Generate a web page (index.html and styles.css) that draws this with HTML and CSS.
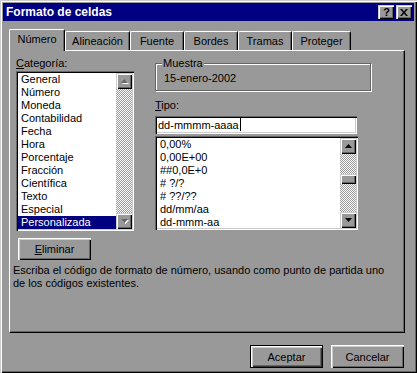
FILE: index.html
```html
<!DOCTYPE html>
<html lang="es">
<head>
  <meta charset="UTF-8" />
  <title>Formato de celdas</title>
  <link rel="stylesheet" href="styles.css">
</head>
<body>
  <div class="dialog">
    <div class="titlebar">
      <span class="title">Formato de celdas</span>
      <div class="title-buttons">
        <span class="tbtn help">?</span>
        <span class="tbtn">
          <svg width="8" height="7" viewBox="0 0 8 7"><path d="M0 0h2l2 2.5L6 0h2L5 3.5 8 7H6L4 4.5 2 7H0l3-3.5z" fill="#000"/></svg>
        </span>
      </div>
    </div>

    <div class="content">
      <div class="tabs">
        <div class="tab active w-numero">Número</div>
        <div class="tab w-alin">Alineación</div>
        <div class="tab w-std">Fuente</div>
        <div class="tab w-std">Bordes</div>
        <div class="tab w-std">Tramas</div>
        <div class="tab w-prot">Proteger</div>
      </div>

      <div class="panel">
        <div class="columns">
          <div class="col-left">
            <div class="label"><u>C</u>ategoría:</div>
            <div class="listbox cat-list">
              <ul class="items">
                <li>General</li>
                <li>Número</li>
                <li>Moneda</li>
                <li>Contabilidad</li>
                <li>Fecha</li>
                <li>Hora</li>
                <li>Porcentaje</li>
                <li>Fracción</li>
                <li>Científica</li>
                <li>Texto</li>
                <li>Especial</li>
                <li class="selected">Personalizada</li>
              </ul>
              <div class="scrollbar">
                <span class="sbtn disabled"><svg width="7" height="4" viewBox="0 0 7 4"><polygon points="3.5,0 7,4 0,4"/></svg></span>
                <span class="track"></span>
                <span class="sbtn disabled"><svg width="7" height="4" viewBox="0 0 7 4"><polygon points="0,0 7,0 3.5,4"/></svg></span>
              </div>
            </div>
            <button class="btn eliminar"><u>E</u>liminar</button>
          </div>

          <div class="col-right">
            <fieldset class="sample">
              <legend>Muestra</legend>
              <div class="sample-value">15-enero-2002</div>
            </fieldset>
            <div class="label tipo-label"><u>T</u>ipo:</div>
            <div class="textbox">dd-mmmm-aaaa<span class="caret"></span></div>
            <div class="listbox type-list">
              <ul class="items">
                <li>0,00%</li>
                <li>0,00E+00</li>
                <li>##0,0E+0</li>
                <li># ?/?</li>
                <li># ??/??</li>
                <li>dd/mm/aa</li>
                <li>dd-mmm-aa</li>
              </ul>
              <div class="scrollbar">
                <span class="sbtn"><svg width="7" height="4" viewBox="0 0 7 4"><polygon points="3.5,0 7,4 0,4"/></svg></span>
                <span class="track"><span class="thumb"></span></span>
                <span class="sbtn"><svg width="7" height="4" viewBox="0 0 7 4"><polygon points="0,0 7,0 3.5,4"/></svg></span>
              </div>
            </div>
          </div>
        </div>

        <p class="hint">Escriba el código de formato de número, usando como punto de partida uno de los códigos existentes.</p>
      </div>

      <div class="actions">
        <button class="btn default">Aceptar</button>
        <button class="btn">Cancelar</button>
      </div>
    </div>
  </div>
</body>
</html>
```

FILE: styles.css
```css
* { box-sizing: border-box; }
body {
  margin: 0;
  background: #999;
  font-family: "Liberation Sans", Arial, sans-serif;
  font-size: 11px;
  color: #000;
}

.dialog {
  width: 417px;
  height: 373px;
  padding: 3px;
  background: #999;
  box-shadow: inset 1px 1px #ccc, inset 2px 2px #fff,
              inset -1px -1px #000, inset -2px -2px #666;
}

/* title bar */
.titlebar {
  height: 18px;
  background: #000080;
  color: #fff;
  display: flex;
  align-items: center;
  justify-content: space-between;
  padding-left: 3px;
}

.title {
  font-weight: bold;
  font-size: 12px;
}

.title-buttons {
  display: flex;
  gap: 2px;
  margin-right: 2px;
}

.tbtn {
  width: 16px;
  height: 14px;
  background: #999;
  display: flex;
  align-items: center;
  justify-content: center;
  box-shadow: inset 1px 1px #ccc, inset 2px 2px #fff,
              inset -1px -1px #000, inset -2px -2px #666;
}

.tbtn.help {
  color: #000;
  font-weight: bold;
  font-size: 11px;
  line-height: 14px;
  padding-left: 1px;
}

/* tabs */
.content {
  padding: 8px 9px 0 6px;
}

.tabs {
  display: flex;
  align-items: flex-end;
  height: 21px;
}

.tab {
  height: 19px;
  border-top: 1px solid #fff;
  border-left: 1px solid #fff;
  border-right: 1px solid #000;
  border-radius: 2px 2px 0 0;
  box-shadow: inset -1px 0 #666;
  display: flex;
  align-items: center;
  justify-content: center;
  padding-bottom: 1px;
}

.tab.active {
  height: 22px;
  margin-bottom: -1px;
  background: #999;
  position: relative;
  z-index: 1;
  padding-bottom: 3px;
}

.w-numero { width: 56px; }
.w-alin { width: 65px; }
.w-std { width: 54px; }
.w-prot { width: 59px; }

.panel {
  height: 283px;
  border-top: 1px solid #fff;
  border-left: 1px solid #fff;
  border-right: 1px solid #000;
  border-bottom: 1px solid #000;
  box-shadow: inset -1px -1px #666;
  padding: 6px 0 0 3px;
}

.columns {
  display: flex;
  gap: 21px;
  padding-left: 3px;
}

.col-left { width: 118px; }
.col-right { width: 216px; }

.label {
  line-height: 13px;
  margin-bottom: 1px;
}

/* list boxes */
.listbox {
  display: flex;
  background: #fff;
  padding: 2px;
  box-shadow: inset 1px 1px #666, inset 2px 2px #000,
              inset -1px -1px #fff, inset -2px -2px #ccc;
}

.cat-list { height: 160px; }
.type-list { height: 94px; width: 203px; margin-top: 2px; }

.items {
  list-style: none;
  margin: 0;
  padding: 0;
  flex: 1;
  overflow: hidden;
}

.items li {
  line-height: 13px;
  height: 13px;
  padding-left: 3px;
  white-space: nowrap;
}

.items li.selected {
  background: #000080;
  color: #fff;
}

.scrollbar {
  width: 16px;
  display: flex;
  flex-direction: column;
}

.sbtn {
  height: 16px;
  background: #999;
  display: flex;
  align-items: center;
  justify-content: center;
  box-shadow: inset 1px 1px #ccc, inset 2px 2px #fff,
              inset -1px -1px #000, inset -2px -2px #666;
}

.sbtn svg { fill: #000; }
.sbtn.disabled svg { fill: #666; filter: drop-shadow(1px 1px 0 #fff); }

.track {
  flex: 1;
  background: repeating-conic-gradient(#fff 0 25%, #999 0 50%) 0 0 / 2px 2px;
}

.thumb {
  display: block;
  height: 10px;
  margin-top: 20px;
  background: #999;
  box-shadow: inset 1px 1px #ccc, inset 2px 2px #fff,
              inset -1px -1px #000, inset -2px -2px #666;
}

/* buttons */
.btn {
  width: 73px;
  height: 23px;
  border: none;
  background: #999;
  font-family: inherit;
  font-size: 11px;
  color: #000;
  padding: 0;
  box-shadow: inset 1px 1px #fff, inset 2px 2px #ccc,
              inset -1px -1px #000, inset -2px -2px #666;
}

.btn.default {
  box-shadow: inset 0 0 0 1px #000, inset 2px 2px #fff, inset 3px 3px #ccc,
              inset -2px -2px #333, inset -3px -3px #666;
}

.eliminar {
  height: 22px;
  margin: 7px 0 0 2px;
  display: block;
}

/* sample group */
.sample {
  margin: 0;
  width: 216px;
  padding: 2px 0 5px 6px;
  border: 1px solid #666;
  box-shadow: inset 1px 1px #fff, 1px 1px #fff;
}

.sample legend {
  padding: 0 1px;
  line-height: 13px;
  background: #999;
}

.sample-value {
  line-height: 13px;
  margin-left: 2px;
}

.tipo-label {
  margin-top: 8px;
  margin-bottom: 4px;
}

.textbox {
  width: 202px;
  height: 18px;
  background: #fff;
  padding: 2px 0 0 3px;
  line-height: 14px;
  box-shadow: inset 1px 1px #666, inset 2px 2px #000,
              inset -1px -1px #fff, inset -2px -2px #ccc;
}

.caret {
  display: inline-block;
  width: 1px;
  height: 13px;
  background: #000;
  vertical-align: -2px;
  margin-left: 1px;
}

.hint {
  margin: 4px 0 0;
  line-height: 13px;
  width: 380px;
}

.actions {
  display: flex;
  justify-content: flex-end;
  gap: 8px;
  margin-top: 12px;
  margin-right: 1px;
}
```
